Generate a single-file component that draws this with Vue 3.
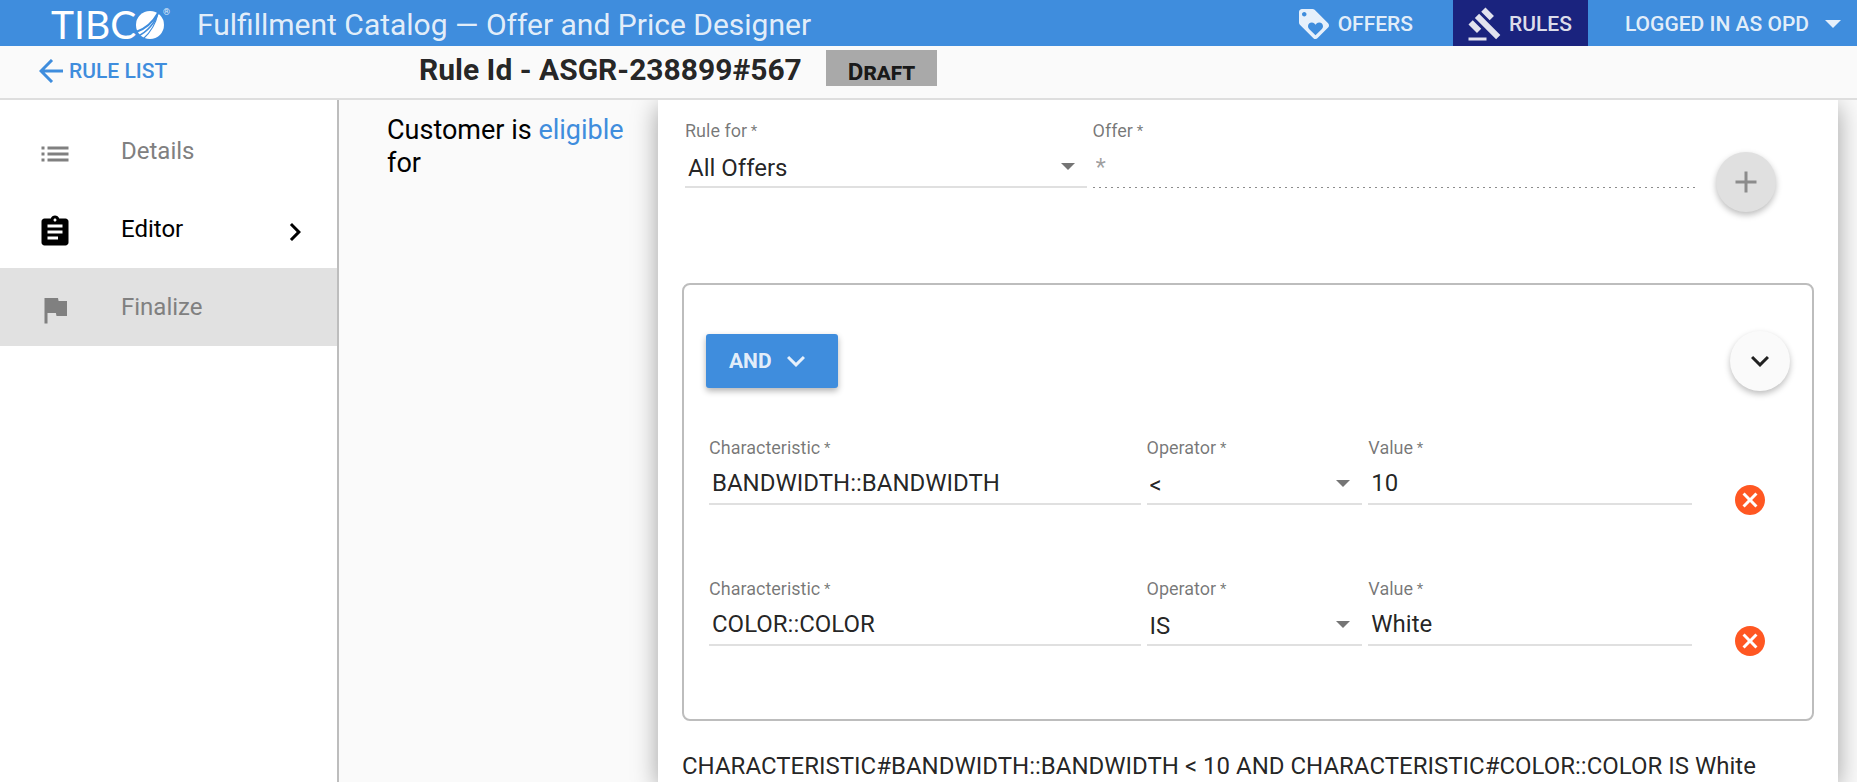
<template>
  <div class="page">
    <!-- Top bar -->
    <header class="topbar">
      <svg class="logo" width="122" height="46" viewBox="0 0 122 46" role="img" aria-label="TIBCO">
        <text x="-1" y="39" class="logo-text">TIBC</text>
        <circle cx="98" cy="25" r="14" fill="#fff" />
        <g fill="none" stroke="#3f8ddd">
          <path d="M84 32C93 29 101 22 106 13" stroke-width="2" />
          <path d="M86 36C95 32 103 23 106 13" stroke-width="1.6" />
          <path d="M91 39C99 32 104 23 106 13" stroke-width="1.2" />
        </g>
        <text x="111" y="15" class="logo-mark">®</text>
      </svg>
      <h1 class="app-title">Fulfillment Catalog — Offer and Price Designer</h1>
      <nav class="nav">
        <a href="#offers" class="nav-link">
          <svg class="icon" viewBox="0 0 24 24"><path :d="icons.loyalty" /></svg>
          OFFERS
        </a>
        <a href="#rules" class="nav-link active">
          <svg class="icon" viewBox="0 0 24 24"><path :d="icons.gavel" /></svg>
          RULES
        </a>
        <button type="button" class="user-menu">
          LOGGED IN AS OPD
          <svg width="16" height="8" viewBox="0 0 16 8"><path d="M0 0h16L8 8z" /></svg>
        </button>
      </nav>
    </header>

    <!-- Rule heading -->
    <div class="subbar">
      <a href="#rule-list" class="back-link">
        <svg width="24" height="24" viewBox="0 0 24 24"><path d="M13 1L2 12l11 11M2 12h22" /></svg>
        RULE LIST
      </a>
      <h2 class="rule-id">Rule Id - {{ ruleId }}</h2>
      <span class="badge">Draft</span>
    </div>

    <div class="body">
      <aside class="sidebar">
        <button
          v-for="step in steps"
          :key="step.label"
          type="button"
          class="step"
          :class="{ current: step.label === currentStep, pending: step.pending }"
          @click="currentStep = step.label"
        >
          <svg class="icon" viewBox="0 0 24 24"><path :d="icons[step.icon]" /></svg>
          <span class="step-label">{{ step.label }}</span>
          <svg v-if="step.label === currentStep" class="icon" viewBox="0 0 24 24">
            <path :d="icons.chevronRight" />
          </svg>
        </button>
      </aside>

      <main class="content">
        <p class="sentence">Customer is <a href="#eligible">eligible</a> for</p>

        <section class="panel">
          <div class="target-row">
            <div class="target-fields">
              <div class="field">
                <label for="rule-for">Rule for<span class="required"> *</span></label>
                <div class="select-wrap">
                  <select id="rule-for" v-model="ruleFor">
                    <option>All Offers</option>
                    <option>Offer</option>
                  </select>
                  <svg class="arrow" width="14" height="7" viewBox="0 0 14 7"><path d="M0 0h14L7 7z" /></svg>
                </div>
              </div>
              <div class="field">
                <label for="offer">Offer<span class="required"> *</span></label>
                <input id="offer" type="text" value="*" disabled />
              </div>
            </div>
            <button type="button" class="fab add" disabled aria-label="Add">
              <svg class="icon" viewBox="0 0 24 24"><path :d="icons.plus" /></svg>
            </button>
          </div>

          <div class="group">
            <div class="group-head">
              <button type="button" class="join" @click="toggleJoin">
                {{ join }}
                <svg class="icon" viewBox="0 0 24 24"><path :d="icons.chevronDown" /></svg>
              </button>
              <button type="button" class="fab" aria-label="Group options">
                <svg class="icon" viewBox="0 0 24 24"><path :d="icons.chevronDown" /></svg>
              </button>
            </div>

            <div v-for="(cond, i) in conditions" :key="cond.id" class="condition">
              <div class="condition-fields">
                <div class="field">
                  <label :for="'char-' + cond.id">Characteristic<span class="required"> *</span></label>
                  <input :id="'char-' + cond.id" v-model="cond.characteristic" type="text" />
                </div>
                <div class="field">
                  <label :for="'op-' + cond.id">Operator<span class="required"> *</span></label>
                  <div class="select-wrap">
                    <select :id="'op-' + cond.id" v-model="cond.operator">
                      <option v-for="op in operators" :key="op">{{ op }}</option>
                    </select>
                    <svg class="arrow" width="14" height="7" viewBox="0 0 14 7"><path d="M0 0h14L7 7z" /></svg>
                  </div>
                </div>
                <div class="field">
                  <label :for="'val-' + cond.id">Value<span class="required"> *</span></label>
                  <input :id="'val-' + cond.id" v-model="cond.value" type="text" />
                </div>
              </div>
              <button type="button" class="remove" aria-label="Remove" @click="conditions.splice(i, 1)">
                <svg class="icon" viewBox="0 0 24 24"><path :d="icons.cancel" /></svg>
              </button>
            </div>
          </div>

          <p class="expression">{{ expression }}</p>
        </section>
      </main>
    </div>
  </div>
</template>

<script setup>
import { ref, computed } from 'vue'

const icons = {
  loyalty: 'M21.41 11.58l-9-9C12.05 2.22 11.55 2 11 2H4c-1.1 0-2 .9-2 2v7c0 .55.22 1.05.59 1.42l9 9c.36.36.86.58 1.41.58.55 0 1.05-.22 1.41-.59l7-7c.37-.36.59-.86.59-1.41 0-.55-.23-1.06-.59-1.42zM5.5 7C4.67 7 4 6.33 4 5.5S4.67 4 5.5 4 7 4.67 7 5.5 6.33 7 5.5 7zm11.77 8.27L13 19.54l-4.27-4.27C8.28 14.81 8 14.19 8 13.5c0-1.38 1.12-2.5 2.5-2.5.69 0 1.32.28 1.77.74l.73.72.73-.73c.45-.45 1.08-.73 1.77-.73 1.38 0 2.5 1.12 2.5 2.5 0 .69-.28 1.32-.73 1.77z',
  gavel: 'M1 21h12v2H1zM5.245 8.07l2.83-2.827 14.14 14.142-2.828 2.828zM12.317 1l5.657 5.656-2.83 2.83-5.654-5.66zM3.825 9.485l5.657 5.657-2.828 2.828-5.657-5.657z',
  list: 'M3 13h2v-2H3v2zm0 4h2v-2H3v2zm0-8h2V7H3v2zm4 4h14v-2H7v2zm0 4h14v-2H7v2zM7 7v2h14V7H7z',
  assignment: 'M19 3h-4.18C14.4 1.84 13.3 1 12 1c-1.3 0-2.4.84-2.82 2H5c-1.1 0-2 .9-2 2v14c0 1.1.9 2 2 2h14c1.1 0 2-.9 2-2V5c0-1.1-.9-2-2-2zm-7 0c.55 0 1 .45 1 1s-.45 1-1 1-1-.45-1-1 .45-1 1-1zm2 14H7v-2h7v2zm3-4H7v-2h10v2zm0-4H7V7h10v2z',
  flag: 'M14.4 6L14 4H5v17h2v-7h5.6l.4 2h7V6z',
  chevronRight: 'M8.59 16.59L13.17 12 8.59 7.41 10 6l6 6-6 6z',
  chevronDown: 'M7.41 8.59L12 13.17l4.59-4.58L18 10l-6 6-6-6z',
  plus: 'M19 13h-6v6h-2v-6H5v-2h6V5h2v6h6v2z',
  cancel: 'M12 2C6.47 2 2 6.47 2 12s4.47 10 10 10 10-4.47 10-10S17.53 2 12 2zm5 13.59L15.59 17 12 13.41 8.41 17 7 15.59 10.59 12 7 8.41 8.41 7 12 10.59 15.59 7 17 8.41 13.41 12 17 15.59z'
}

const ruleId = 'ASGR-238899#567'

const steps = [
  { label: 'Details', icon: 'list' },
  { label: 'Editor', icon: 'assignment' },
  { label: 'Finalize', icon: 'flag', pending: true }
]
const currentStep = ref('Editor')

const ruleFor = ref('All Offers')
const join = ref('AND')
const operators = ['<', '>', '=', 'IS', 'IS NOT']

const conditions = ref([
  { id: 1, characteristic: 'BANDWIDTH::BANDWIDTH', operator: '<', value: '10' },
  { id: 2, characteristic: 'COLOR::COLOR', operator: 'IS', value: 'White' }
])

// Readable form of the rule, shown under the group
const expression = computed(() =>
  conditions.value
    .map((c) => `CHARACTERISTIC#${c.characteristic} ${c.operator} ${c.value}`)
    .join(` ${join.value} `)
)

function toggleJoin() {
  join.value = join.value === 'AND' ? 'OR' : 'AND'
}
</script>

<style>
body {
  margin: 0;
  background: #fafafa;
}
</style>

<style scoped>
.page {
  display: flex;
  flex-direction: column;
  min-height: 100vh;
  font-family: Roboto, "Liberation Sans", sans-serif;
  font-size: 24px;
  color: rgba(0, 0, 0, 0.87);
}

.page * {
  box-sizing: border-box;
}

h1,
h2,
p {
  margin: 0;
}

a {
  color: #3f8ddd;
  text-decoration: none;
}

button,
input,
select {
  margin: 0;
  padding: 0;
  border: none;
  background: none;
  font-family: inherit;
  font-size: 24px;
  color: inherit;
}

button {
  cursor: pointer;
}

svg {
  flex: none;
  fill: currentColor;
}

.icon {
  width: 36px;
  height: 36px;
}

/* Top bar */
.topbar {
  display: flex;
  align-items: center;
  height: 46px;
  padding-left: 52px;
  background: #3f8ddd;
  color: rgba(255, 255, 255, 0.87);
}

.logo {
  overflow: visible;
}

.logo-text {
  font-family: Lato, sans-serif;
  font-size: 39px;
  fill: #fff;
}

.logo-mark {
  font-size: 9px;
}

.app-title {
  margin-left: 23px;
  padding-top: 3px;
  font-size: 30px;
  line-height: 43px;
  font-weight: 400;
  white-space: nowrap;
}

.nav {
  display: flex;
  align-self: stretch;
  margin-left: auto;
}

.nav-link,
.user-menu {
  display: flex;
  align-items: center;
  gap: 6px;
  padding: 2px 16px 0 14px;
  font-size: 21px;
  font-weight: 500;
  color: inherit;
  white-space: nowrap;
}

.nav-link + .nav-link {
  margin-left: 24px;
}

.nav-link.active {
  background: #1a237e;
}

.user-menu {
  gap: 16px;
  margin-left: 23px;
}

/* Rule heading */
.subbar {
  display: flex;
  height: 54px;
  padding: 4px 39px 0;
  border-bottom: 2px solid #dedede;
  background: #fafafa;
}

.back-link {
  display: flex;
  align-items: center;
  gap: 6px;
  width: 380px;
  height: 42px;
  font-size: 21px;
  font-weight: 500;
}

.back-link svg {
  fill: none;
  stroke: currentColor;
  stroke-width: 3;
}

.rule-id {
  font-size: 30px;
  line-height: 40px;
  font-weight: 700;
  white-space: nowrap;
}

.badge {
  height: 36px;
  margin-left: 24px;
  padding: 0 22px;
  background: #a9a9a9;
  font-size: 24px;
  line-height: 44px;
  font-weight: 700;
  font-variant: small-caps;
}

/* Steps */
.body {
  display: flex;
  flex: 1;
  overflow: hidden;
}

.sidebar {
  flex: none;
  width: 339px;
  padding-top: 12px;
  border-right: 2px solid #bdbdbd;
  background: #fff;
}

.step {
  display: flex;
  align-items: center;
  width: 100%;
  height: 78px;
  padding: 0 24px 0 37px;
  color: #808080;
  text-align: left;
}

.step.current {
  color: #000;
}

.step.pending {
  background: #e1e1e1;
}

.step .icon {
  margin-top: 6px;
}

.step-label {
  flex: 1;
  margin-left: 48px;
}

/* Content */
.content {
  display: flex;
  flex: 1;
  padding-right: 19px;
  background: #fafafa;
}

.sentence {
  flex: none;
  width: 319px;
  padding: 14px 24px 0 48px;
  font-size: 27px;
  line-height: 33px;
  color: #000;
}

.panel {
  flex: 1;
  min-width: 0;
  padding: 19px 24px 0;
  background: #fff;
  box-shadow: 0 6px 24px rgba(0, 0, 0, 0.36);
}

/* Fields */
.field {
  min-width: 0;
}

.field label {
  display: block;
  height: 24px;
  margin-bottom: 6px;
  font-size: 18px;
  line-height: 24px;
  color: rgba(0, 0, 0, 0.54);
}

.required {
  font-size: 15px;
  vertical-align: top;
}

.field input,
.field select {
  display: block;
  width: 100%;
  height: 39px;
  padding: 0 3px;
  border-bottom: 2px solid #e0e0e0;
  border-radius: 0;
  outline: none;
  appearance: none;
}

.field input {
  padding-bottom: 3px;
}

.field input:disabled {
  border-bottom: none;
  color: rgba(0, 0, 0, 0.38);
  background: linear-gradient(to right, #8c8c8c 2px, transparent 2px) left bottom / 6px 1px repeat-x;
}

.select-wrap {
  position: relative;
}

.arrow {
  position: absolute;
  top: 14px;
  right: 12px;
  color: #757575;
  pointer-events: none;
}

.target-row {
  display: flex;
  align-items: flex-start;
  gap: 21px;
  padding: 0 38px 0 3px;
}

.target-fields {
  display: grid;
  grid-template-columns: 2fr 3fr;
  gap: 6px;
  flex: 1;
}

.fab {
  display: flex;
  align-items: center;
  justify-content: center;
  flex: none;
  width: 60px;
  height: 60px;
  border-radius: 50%;
  background: #fafafa;
  box-shadow: 0 3px 6px rgba(0, 0, 0, 0.26);
}

.add {
  margin-top: 33px;
  background: #e0e0e0;
  color: #8c8c8c;
}

/* Condition group */
.group {
  margin-top: 71px;
  padding: 46px 22px 1px;
  border: 2px solid #bdbdbd;
  border-radius: 8px;
}

.group-head {
  display: flex;
  align-items: center;
  justify-content: space-between;
  margin-bottom: 45px;
}

.join {
  display: flex;
  align-items: center;
  gap: 6px;
  height: 54px;
  padding: 0 24px 0 23px;
  border-radius: 3px;
  background: #3f8ddd;
  box-shadow: 0 3px 6px rgba(0, 0, 0, 0.3);
  color: rgba(255, 255, 255, 0.87);
  font-size: 21px;
  font-weight: 700;
}

.condition {
  display: flex;
  align-items: flex-start;
  gap: 40px;
  margin-bottom: 59px;
  padding: 0 22px 0 3px;
}

.condition-fields {
  display: grid;
  grid-template-columns: 4fr 2fr 3fr;
  gap: 6px;
  flex: 1;
}

.remove {
  display: flex;
  margin-top: 46px;
  color: #ff5722;
}

.expression {
  margin-top: 31px;
  line-height: 28px;
}
</style>
